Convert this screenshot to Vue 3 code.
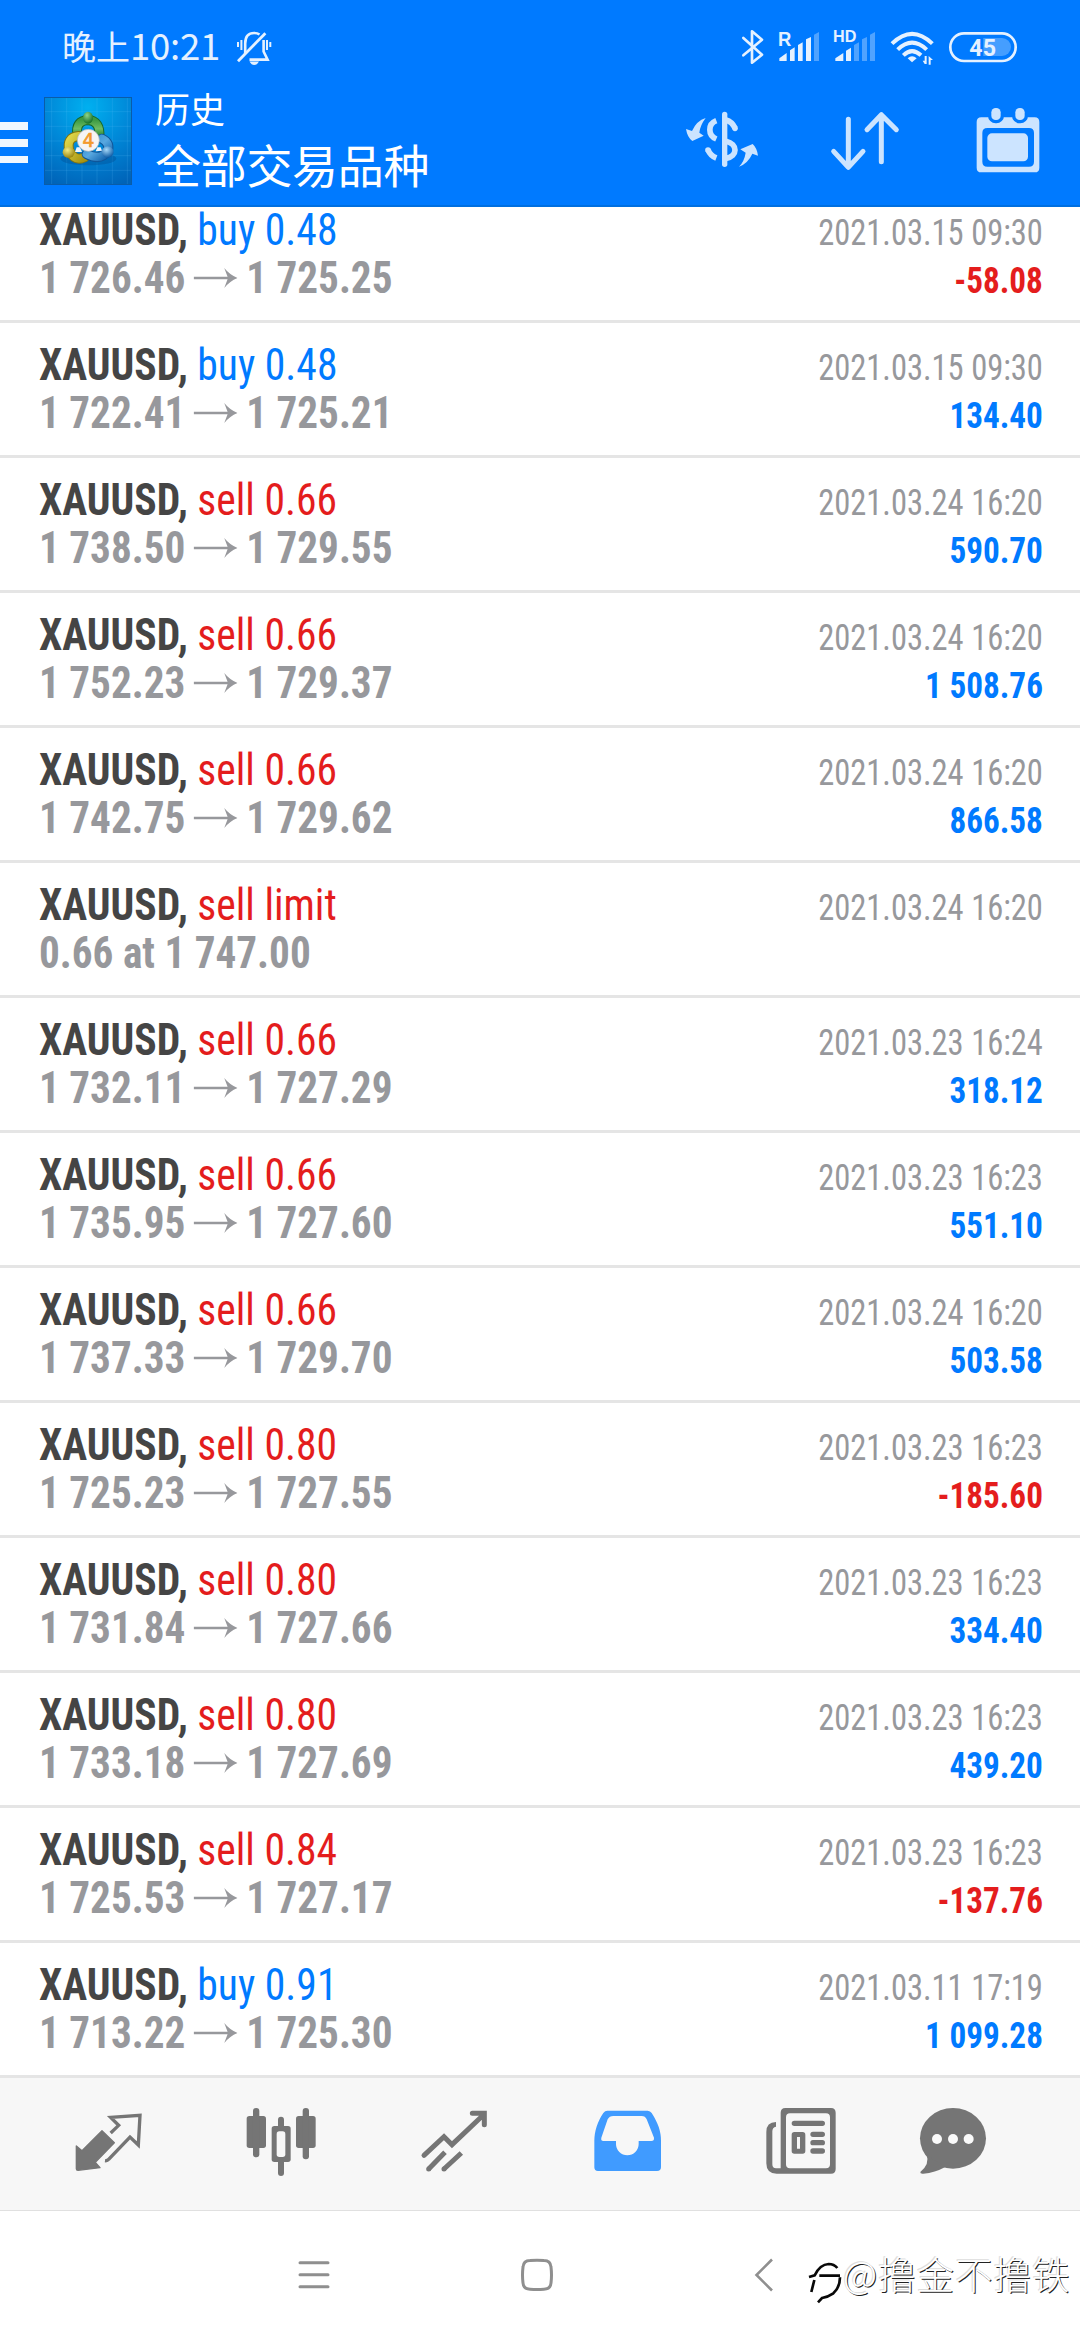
<script setup>
const deals = [
  ['buy', '0.48', '1 726.46', '1 725.25', '2021.03.15 09:30', '-58.08'],
  ['buy', '0.48', '1 722.41', '1 725.21', '2021.03.15 09:30', '134.40'],
  ['sell', '0.66', '1 738.50', '1 729.55', '2021.03.24 16:20', '590.70'],
  ['sell', '0.66', '1 752.23', '1 729.37', '2021.03.24 16:20', '1 508.76'],
  ['sell', '0.66', '1 742.75', '1 729.62', '2021.03.24 16:20', '866.58'],
  ['sell', 'limit', '0.66 at 1 747.00', '', '2021.03.24 16:20', ''],
  ['sell', '0.66', '1 732.11', '1 727.29', '2021.03.23 16:24', '318.12'],
  ['sell', '0.66', '1 735.95', '1 727.60', '2021.03.23 16:23', '551.10'],
  ['sell', '0.66', '1 737.33', '1 729.70', '2021.03.24 16:20', '503.58'],
  ['sell', '0.80', '1 725.23', '1 727.55', '2021.03.23 16:23', '-185.60'],
  ['sell', '0.80', '1 731.84', '1 727.66', '2021.03.23 16:23', '334.40'],
  ['sell', '0.80', '1 733.18', '1 727.69', '2021.03.23 16:23', '439.20'],
  ['sell', '0.84', '1 725.53', '1 727.17', '2021.03.23 16:23', '-137.76'],
  ['buy', '0.91', '1 713.22', '1 725.30', '2021.03.11 17:19', '1 099.28'],
].map(([side, volume, open, close, time, profit]) => ({ side, volume, open, close, time, profit }))
</script>

<template>
  <div class="screen">
    <header class="top">
      <div class="status">
        <div class="clock"><span class="period">晚上</span><span class="digits">10:21</span></div>
        <svg class="bell" viewBox="234 28 40 40" width="40" height="40" fill="none" stroke="#e5f1ff" stroke-width="2.6">
          <path d="M245.2 54V43.5Q245.2 33 254.2 33Q257.5 33 259.5 34.5M263.6 40V51.5L267.6 59.6H249.5" />
          <path d="M238 61.2L265.4 33.2" stroke-width="2.8" />
          <path d="M238 42v5M241.4 40v10M267 40v10M270.3 42v5" stroke-width="2" />
          <path d="M249.5 61.5H259Q257 65 254.2 65Q251.5 65 249.5 61.5Z" fill="#e5f1ff" stroke="none" />
        </svg>
        <svg class="signals" viewBox="0 0 900 150" width="300" height="50" fill="#e5f1ff">
          <path d="M40 54L96 104L66 128V34L96 59L40 106" fill="none" stroke="#e5f1ff" stroke-width="8" stroke-linejoin="round" stroke-linecap="round" />
          <text x="144" y="77" font-size="58" textLength="40" lengthAdjust="spacingAndGlyphs" class="tag">R</text>
          <path d="M148 123V115L170 99V123ZM180 123V91L194 82V123ZM204 123V75L218 67V123ZM228 123V58L243 51V123Z" />
          <path d="M252 123V44L267 36V123Z" opacity=".35" />
          <text x="309" y="67" font-size="49" textLength="70" lengthAdjust="spacingAndGlyphs" class="tag">HD</text>
          <path d="M316 123V115L340 99V123ZM348 123V92L363 83V123Z" />
          <path d="M372 123V75L387 67V123ZM396 123V58L411 51V123ZM420 123V44L435 36V123Z" opacity=".35" />
          <g fill="none" stroke="#e5f1ff" stroke-width="12">
            <path d="M486 71Q546 12 607 71" />
            <path d="M503 89Q546 47 590 89" />
            <path d="M520 106Q546 81 573 106" />
          </g>
          <path d="M533 115Q546 103 560 115L546 127Z" />
          <path d="M578 122H584V108H590V132H584ZM596 108L609 120H602V134H596Z" />
          <rect x="661" y="40" width="196" height="83" rx="41" fill="none" stroke="#e5f1ff" stroke-width="8" />
          <path d="M760 54H816A27 27 0 0 1 816 108H760Z" opacity=".3" />
          <text x="718" y="108" font-size="72" textLength="80" lengthAdjust="spacingAndGlyphs" class="level">45</text>
        </svg>
      </div>
      <div class="bar">
        <div class="burger"><i></i><i></i><i></i></div>
        <svg class="logo" viewBox="132 51 264 264" width="88" height="88">
          <defs>
            <radialGradient id="bg" cx=".5" cy=".12" r=".95"><stop offset="0" stop-color="#00b0f0" /><stop offset=".5" stop-color="#0088d8" /><stop offset="1" stop-color="#0063b8" /></radialGradient>
            <linearGradient id="gr" x2="0" y2="1"><stop offset="0" stop-color="#3c9a42" /><stop offset=".5" stop-color="#6fbc62" /><stop offset="1" stop-color="#1d7a2c" /></linearGradient>
            <linearGradient id="ye" x2="1" y2="1"><stop offset="0" stop-color="#e0d84a" /><stop offset="1" stop-color="#a89412" /></linearGradient>
            <linearGradient id="bl" x2="1" y2="1"><stop offset="0" stop-color="#2f8ed2" /><stop offset=".5" stop-color="#58a8e0" /><stop offset="1" stop-color="#1264ae" /></linearGradient>
            <radialGradient id="gh" cx=".4" cy=".3" r=".7"><stop offset="0" stop-color="#8fd48a" /><stop offset="1" stop-color="#14702a" /></radialGradient>
            <radialGradient id="yh" cx=".4" cy=".3" r=".7"><stop offset="0" stop-color="#f2ea80" /><stop offset="1" stop-color="#9a8510" /></radialGradient>
            <radialGradient id="bh" cx=".4" cy=".3" r=".7"><stop offset="0" stop-color="#a5d8f8" /><stop offset="1" stop-color="#0e5ca6" /></radialGradient>
          </defs>
          <rect x="132" y="51" width="264" height="264" fill="url(#bg)" />
          <path d="M155 51V315M200 51V315M246 51V315M291 51V315M337 51V315M382 51V315M132 95H396M132 139H396M132 183H396M132 227H396M132 271H396" stroke="#6cc8ff" stroke-opacity=".16" stroke-width="3" />
          <ellipse cx="265" cy="236" rx="84" ry="20" fill="#003f80" opacity=".3" />
          <g fill="none" stroke-linecap="round">
            <path d="M232 164Q226 122 264 120Q302 122 298 172" stroke="#17682a" stroke-width="30" />
            <path d="M232 164Q226 122 264 120Q302 122 298 172" stroke="url(#gr)" stroke-width="24" />
            <path d="M236 168Q198 172 208 212Q224 246 254 232" stroke="#807410" stroke-width="30" />
            <path d="M236 168Q198 172 208 212Q224 246 254 232" stroke="url(#ye)" stroke-width="24" />
            <path d="M306 176Q330 188 324 212Q302 244 260 222" stroke="#0f5598" stroke-width="30" />
            <path d="M306 176Q330 188 324 212Q302 244 260 222" stroke="url(#bl)" stroke-width="24" />
          </g>
          <path d="M225 216L230 202H240L246 216ZM287 214L292 202H302L306 212Z" fill="#edf5ff" />
          <ellipse cx="264" cy="113" rx="15" ry="18" fill="url(#gh)" />
          <ellipse cx="206" cy="217" rx="18" ry="17" fill="url(#yh)" />
          <ellipse cx="323" cy="216" rx="18" ry="17" fill="url(#bh)" />
          <circle cx="265" cy="181" r="33" fill="#f6f4f4" stroke="#aeb3b8" stroke-width="2" />
          <text x="265" y="202" text-anchor="middle" font-size="56" class="four">4</text>
        </svg>
        <div class="titles">
          <div class="sub">历史</div>
          <div class="main">全部交易品种</div>
        </div>
        <svg class="actions" viewBox="0 0 1110 240" width="370" height="80" fill="#cce4ff">
          <path d="M134 43V193" stroke="#cce4ff" stroke-width="16" stroke-linecap="round" />
          <g fill="none" stroke="#cce4ff" stroke-width="17">
            <path d="M109 62C83 72 83 106 109 117" />
            <path d="M84 149Q91 167 109 174" />
            <path d="M138 60Q156 65 165 84" />
            <path d="M138 124C174 132 174 169 138 175" />
          </g>
          <circle cx="165" cy="85" r="8.5" /><circle cx="84" cy="150" r="8.5" />
          <path d="M77 54Q50 62 36 93L18 87Q22 112 37 123L71 107L58 98Q60 77 77 54Z" />
          <path d="M177 200Q193 184 197 158L181 148L218 132Q231 144 234 167L217 161Q204 190 177 200Z" />
          <g fill="none" stroke="#cce4ff" stroke-width="15" stroke-linecap="round" stroke-linejoin="round">
            <path d="M505 58V201M461 154L505 202L549 154M604 185V44M561 89L604 44L649 89" />
          </g>
          <path fill-rule="evenodd" d="M904 52H1064Q1078 52 1078 66V203Q1078 217 1064 217H904Q890 217 890 203V66Q890 52 904 52ZM922 84Q907 84 907 99V185Q907 200 922 200H1047Q1062 200 1062 185V99Q1062 84 1047 84Z" />
          <rect x="922" y="100" width="122" height="84" rx="14" />
          <g stroke="#007aff" stroke-width="20" paint-order="stroke"><rect x="934" y="24" width="28" height="36" rx="13" /><rect x="1006" y="24" width="28" height="36" rx="13" /></g>
        </svg>
      </div>
    </header>

    <main class="list">
      <article v-for="(d, i) in deals" :key="i" class="deal">
        <div class="left">
          <div class="line"><span class="symbol">XAUUSD,</span><span :class="d.side">{{ d.side }} {{ d.volume }}</span></div>
          <div class="line price">
            <span>{{ d.open }}</span>
            <template v-if="d.close">
              <svg class="arrow" viewBox="0 0 132 60" preserveAspectRatio="none" width="48" height="20"><path d="M0 26H102L92 0Q108 20 132 30Q108 40 92 60L102 34H0Z" fill="#97989c" /></svg>
              <span>{{ d.close }}</span>
            </template>
          </div>
        </div>
        <div class="right">
          <div class="time">{{ d.time }}</div>
          <div v-if="d.profit" class="profit" :class="{ loss: d.profit.startsWith('-') }">{{ d.profit }}</div>
        </div>
      </article>
    </main>

    <nav class="tabs">
      <svg viewBox="0 0 440 90" width="440" height="90" fill="#757575" stroke="#757575">
        <g transform="scale(.33333)">
          <path d="M126 92L163 128L106 187L120 203L54 211Q49 211 49 206L49 138L66 152Z" stroke-width="4" stroke-linejoin="round" />
          <path d="M152 99L176 76L152 52L240 46L235 135L210 111L146 178Q142 183 135 182" fill="none" stroke-width="10" />
          <g stroke="none">
            <rect x="560" y="48" width="58" height="96" rx="8" /><rect x="579" y="24" width="19" height="148" rx="9" />
            <rect x="708" y="48" width="59" height="96" rx="8" /><rect x="728" y="24" width="19" height="154" rx="9" />
            <rect x="654" y="50" width="18" height="50" rx="9" /><rect x="654" y="160" width="18" height="68" rx="9" />
            <rect x="635" y="78" width="57" height="108" rx="8" /><rect x="650" y="94" width="26" height="77" rx="8" fill="#f7f7f7" />
          </g>
          <path d="M1092 166L1152 110L1176 134L1270 45M1237 40H1273V74" fill="none" stroke-width="15" stroke-linecap="round" />
          <path d="M1106 207L1155 157M1152 207L1204 159" fill="none" stroke-width="15" />
          <g stroke="none"><circle cx="1106" cy="207" r="7.5" /><circle cx="1152" cy="207" r="7.5" /></g>
        </g>
      </svg>
      <svg viewBox="0 0 420 90" width="420" height="90" fill="#757575">
        <g transform="scale(.33333)">
          <path fill="#409bff" fill-rule="evenodd" d="M82 32H203Q211 33 215 39C235 70 243 95 243 122V202Q243 213 231 213H54Q43 213 43 202V122C43 95 52 65 70 39Q75 32 82 32ZM100 48Q88 48 83 58L64 113Q62 123 70 123H108V132A34 34 0 0 0 176 132V123H214Q223 123 222 113L200 58Q196 48 185 48Z" />
          <path fill-rule="evenodd" d="M616 24H753Q767 24 767 38V207Q767 221 753 221H590Q559 221 559 190V96Q559 66 588 66V80Q577 82 577 94V192Q577 205 588 205H602V38Q602 24 616 24ZM630 40Q618 40 618 52V193Q618 205 630 205H738Q750 205 750 193V52Q750 40 738 40Z" />
          <path d="M643 70H727M699 103H727M699 128H727M699 153H727" stroke="#757575" stroke-width="16" stroke-linecap="round" />
          <path fill-rule="evenodd" d="M643 96H668Q676 96 676 104V153Q676 161 668 161H643Q635 161 635 153V104Q635 96 643 96ZM651 111V146H660V111Z" />
          <ellipse cx="1119" cy="115" rx="99" ry="91" />
          <path d="M1040 165Q1050 192 1021 216Q1020 222 1030 221Q1065 218 1096 201Z" />
          <g fill="#fafafa"><circle cx="1071" cy="117" r="15" /><circle cx="1119" cy="117" r="15" /><circle cx="1166" cy="117" r="15" /></g>
        </g>
      </svg>
    </nav>

    <footer class="system">
      <svg viewBox="290 2250 490 50" width="490" height="50" fill="none" stroke="#8f8f8f" stroke-width="3">
        <path d="M300 2262.7H328M300 2274.7H328M300 2286.7H328" stroke-linecap="round" />
        <path d="M530 2260.5Q537 2259.8 544 2260.5Q550.5 2260.5 551 2267Q552 2275 551 2283Q550.5 2289 544 2289.2Q537 2290 530 2289.2Q523.5 2289 523 2283Q522 2275 523 2267Q523.5 2260.5 530 2260.5Z" />
        <path d="M772 2259.5L756.5 2275L772 2290.5" stroke-width="2.6" />
      </svg>
      <div class="mark">
        <svg viewBox="204 36 102 126" width="34" height="42" fill="none" stroke="#080808" stroke-width="8"><path d="M207 81L224 76Q240 43 266 42Q282 42 292 54M223 90L214 126M238 77H300" /><path d="M300 82Q300 112 280 130Q264 141 246 144L234 157" /></svg>
        <span>@撸金不撸铁</span>
      </div>
    </footer>
  </div>
</template>

<style>
body { margin: 0; background: #fff; }
</style>

<style scoped>
.screen { width: 1080px; height: 2340px; overflow: hidden; display: flex; flex-direction: column; font-family: "Roboto Condensed", Roboto, sans-serif; background: #fff; }
.top { height: 207px; flex: none; background: #007aff; color: #fff; box-sizing: border-box; border-bottom: 2px solid #006fe0; }
.status { height: 70px; display: flex; padding: 20px 50px 0 62px; box-sizing: border-box; color: #e5f1ff; }
.clock { display: flex; align-items: baseline; width: 172px; height: 50px; line-height: 50px; font-family: "Noto Sans CJK SC", sans-serif; white-space: nowrap; }
.period { font-size: 34px; }
.digits { font-size: 36.5px; letter-spacing: -0.2px; }
.bell { margin: 8px auto 0 0; flex: none; }
.signals { flex: none; }
.tag { font-family: "Liberation Sans", sans-serif; font-weight: 700; }
.level { font-family: Roboto, sans-serif; font-weight: 700; }
.four { font-family: "DejaVu Sans", sans-serif; font-weight: 400; fill: #f39a2c; stroke: #f39a2c; stroke-width: 2; }
.bar { display: flex; align-items: flex-start; padding-right: 30px; height: 135px; }
.burger { width: 28px; padding-top: 52px; display: flex; flex-direction: column; gap: 9px; flex: none; }
.burger i { height: 7.8px; background: #f0f7ff; }
.logo { margin: 27px 0 0 16px; flex: none; outline: 1px solid #0a5ca8; outline-offset: -1px; }
.titles { margin: 13px auto 0 23px; font-family: "Noto Sans CJK SC", sans-serif; white-space: nowrap; }
.sub { font-size: 35px; line-height: 50px; height: 50px; }
.main { font-size: 46px; line-height: 60px; letter-spacing: -0.3px; }
.actions { margin-top: 30px; flex: none; }
.list { height: 1871px; flex: none; display: flex; flex-direction: column; }
.deal { height: 135px; flex: none; box-sizing: border-box; border-bottom: 3px solid #e5e5e5; padding: 0 37.5px 0 39px; display: flex; justify-content: space-between; white-space: nowrap; }
.left { padding-top: 18px; font-size: 45px; }
.deal:first-child { height: 116px; }
.deal:first-child .left { padding-top: 0; margin-top: -1px; }
.deal:first-child .right { padding-top: 2px; }
.line { height: 48px; line-height: 48px; display: flex; align-items: center; transform: scaleX(.925); transform-origin: 0 0; }
.symbol { font-weight: 700; color: #454545; margin-right: 10px; }
.buy { color: #007aff; }
.sell { color: #e41d1d; }
.price { font-weight: 700; color: #97989c; transform: scaleX(.915); }
.arrow { margin: 0 9px 0 9.5px; flex: none; }
.right { padding-top: 21px; font-size: 36px; line-height: 48px; text-align: right; }
.time { color: #97989c; transform: scaleX(.903); transform-origin: 100% 0; }
.profit { font-weight: 700; color: #007aff; transform: scaleX(.922); transform-origin: 100% 0; }
.profit.loss { color: #e41d1d; }
.tabs { height: 132px; flex: none; background: #f7f7f7; display: flex; justify-content: space-between; padding: 22px 80px 0 60px; box-sizing: border-box; }
.system { height: 130px; flex: none; box-sizing: border-box; border-top: 1px solid #e0e0e0; padding: 39px 0 0 290px; display: flex; align-items: flex-start; }
.mark { display: flex; margin-left: 28px; white-space: nowrap; font-family: "Noto Sans CJK SC", sans-serif; font-size: 37.5px; line-height: 50px; color: #fff; }
.mark svg { margin-top: 12px; flex: none; }
.mark span { margin: -2px 0 0 1px; letter-spacing: 1px; font-weight: 300; text-shadow: 1px 1px 0 #222, -1px -1px 0 #ddd; }
</style>
